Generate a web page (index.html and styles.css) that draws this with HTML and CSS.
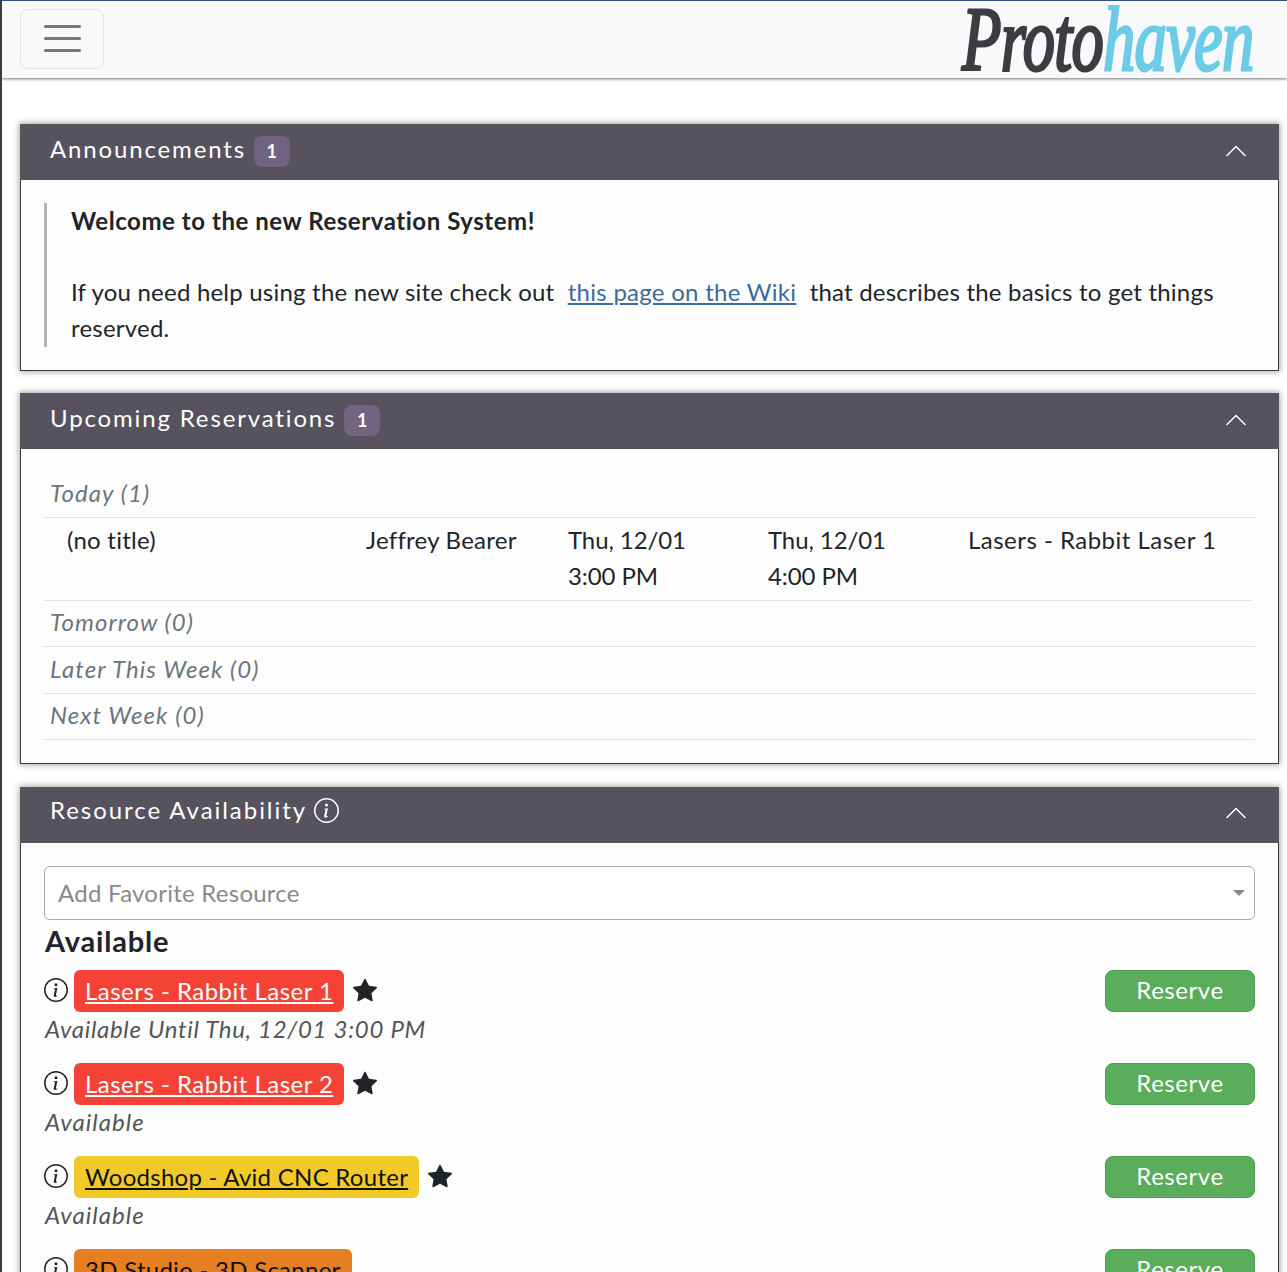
FILE: index.html
```html
<!DOCTYPE html>
<html lang="en">
<head>
<meta charset="utf-8">
<title>Protohaven Reservations</title>
<link rel="stylesheet" href="styles.css">
</head>
<body>
<div class="page">
  <nav class="navbar">
    <button class="toggler" aria-label="Menu"><span></span><span></span><span></span></button>
    <div class="logo"><span class="logo-dark">Proto</span><span class="logo-blue">haven</span></div>
  </nav>
  <main class="main">
    <section class="card">
      <header class="card-head">
        <h2 class="card-title">Announcements</h2><span class="badge">1</span>
        <svg class="chev" viewBox="0 0 16 16"><path d="M7.646 4.646a.5.5 0 0 1 .708 0l6 6a.5.5 0 0 1-.708.708L8 5.707l-5.646 5.647a.5.5 0 0 1-.708-.708l6-6z"/></svg>
      </header>
      <div class="card-body">
        <blockquote class="quote">
          <p class="quote-lead">Welcome to the new Reservation System!</p>
          <p class="quote-text">If you need help using the new site check out <a class="wiki" href="#">this page on the Wiki</a> that describes the basics to get things reserved.</p>
        </blockquote>
      </div>
    </section>

    <section class="card">
      <header class="card-head">
        <h2 class="card-title">Upcoming Reservations</h2><span class="badge">1</span>
        <svg class="chev" viewBox="0 0 16 16"><path d="M7.646 4.646a.5.5 0 0 1 .708 0l6 6a.5.5 0 0 1-.708.708L8 5.707l-5.646 5.647a.5.5 0 0 1-.708-.708l6-6z"/></svg>
      </header>
      <div class="card-body upcoming">
        <div class="day">Today (1)</div>
        <div class="res-row">
          <div>(no title)</div>
          <div>Jeffrey Bearer</div>
          <div class="cell-date">Thu, 12/01<br>3:00 PM</div>
          <div class="cell-date">Thu, 12/01<br>4:00 PM</div>
          <div class="cell-res">Lasers - Rabbit Laser 1</div>
        </div>
        <div class="day">Tomorrow (0)</div>
        <div class="day">Later This Week (0)</div>
        <div class="day">Next Week (0)</div>
      </div>
    </section>

    <section class="card">
      <header class="card-head">
        <h2 class="card-title card-title-res">Resource Availability</h2>
        <svg class="head-info" viewBox="0 0 16 16"><path d="M8 15A7 7 0 1 1 8 1a7 7 0 0 1 0 14zm0 1A8 8 0 1 0 8 0a8 8 0 0 0 0 16z"/><path d="m8.93 6.588-2.29.287-.082.38.45.083c.294.07.352.176.288.469l-.738 3.468c-.194.897.105 1.319.808 1.319.545 0 1.178-.252 1.465-.598l.088-.416c-.2.176-.492.246-.686.246-.275 0-.375-.193-.304-.533L8.93 6.588zM9 4.5a1 1 0 1 1-2 0 1 1 0 0 1 2 0z"/></svg>
        <svg class="chev" viewBox="0 0 16 16"><path d="M7.646 4.646a.5.5 0 0 1 .708 0l6 6a.5.5 0 0 1-.708.708L8 5.707l-5.646 5.647a.5.5 0 0 1-.708-.708l6-6z"/></svg>
      </header>
      <div class="card-body resources">
        <div class="select"><span>Add Favorite Resource</span><i class="caret"></i></div>
        <h3 class="avail-title">Available</h3>

        <div class="res-item">
          <svg class="info" viewBox="0 0 16 16"><path d="M8 15A7 7 0 1 1 8 1a7 7 0 0 1 0 14zm0 1A8 8 0 1 0 8 0a8 8 0 0 0 0 16z"/><path d="m8.93 6.588-2.29.287-.082.38.45.083c.294.07.352.176.288.469l-.738 3.468c-.194.897.105 1.319.808 1.319.545 0 1.178-.252 1.465-.598l.088-.416c-.2.176-.492.246-.686.246-.275 0-.375-.193-.304-.533L8.93 6.588zM9 4.5a1 1 0 1 1-2 0 1 1 0 0 1 2 0z"/></svg>
          <a class="tag tag-red" href="#">Lasers - Rabbit Laser 1</a>
          <svg class="star" viewBox="0 0 16 16"><path d="M3.612 15.443c-.386.198-.824-.149-.746-.592l.83-4.73L.173 6.765c-.329-.314-.158-.888.283-.95l4.898-.696L7.538.792c.197-.39.73-.39.927 0l2.184 4.327 4.898.696c.441.062.612.636.282.95l-3.522 3.356.83 4.73c.078.443-.36.79-.746.592L8 13.187l-4.389 2.256z"/></svg>
          <button class="reserve">Reserve</button>
          <div class="status status-until">Available Until Thu, 12/01 3:00 PM</div>
        </div>

        <div class="res-item">
          <svg class="info" viewBox="0 0 16 16"><path d="M8 15A7 7 0 1 1 8 1a7 7 0 0 1 0 14zm0 1A8 8 0 1 0 8 0a8 8 0 0 0 0 16z"/><path d="m8.93 6.588-2.29.287-.082.38.45.083c.294.07.352.176.288.469l-.738 3.468c-.194.897.105 1.319.808 1.319.545 0 1.178-.252 1.465-.598l.088-.416c-.2.176-.492.246-.686.246-.275 0-.375-.193-.304-.533L8.93 6.588zM9 4.5a1 1 0 1 1-2 0 1 1 0 0 1 2 0z"/></svg>
          <a class="tag tag-red" href="#">Lasers - Rabbit Laser 2</a>
          <svg class="star" viewBox="0 0 16 16"><path d="M3.612 15.443c-.386.198-.824-.149-.746-.592l.83-4.73L.173 6.765c-.329-.314-.158-.888.283-.95l4.898-.696L7.538.792c.197-.39.73-.39.927 0l2.184 4.327 4.898.696c.441.062.612.636.282.95l-3.522 3.356.83 4.73c.078.443-.36.79-.746.592L8 13.187l-4.389 2.256z"/></svg>
          <button class="reserve">Reserve</button>
          <div class="status">Available</div>
        </div>

        <div class="res-item">
          <svg class="info" viewBox="0 0 16 16"><path d="M8 15A7 7 0 1 1 8 1a7 7 0 0 1 0 14zm0 1A8 8 0 1 0 8 0a8 8 0 0 0 0 16z"/><path d="m8.93 6.588-2.29.287-.082.38.45.083c.294.07.352.176.288.469l-.738 3.468c-.194.897.105 1.319.808 1.319.545 0 1.178-.252 1.465-.598l.088-.416c-.2.176-.492.246-.686.246-.275 0-.375-.193-.304-.533L8.93 6.588zM9 4.5a1 1 0 1 1-2 0 1 1 0 0 1 2 0z"/></svg>
          <a class="tag tag-yellow" href="#">Woodshop - Avid CNC Router</a>
          <svg class="star" viewBox="0 0 16 16"><path d="M3.612 15.443c-.386.198-.824-.149-.746-.592l.83-4.73L.173 6.765c-.329-.314-.158-.888.283-.95l4.898-.696L7.538.792c.197-.39.73-.39.927 0l2.184 4.327 4.898.696c.441.062.612.636.282.95l-3.522 3.356.83 4.73c.078.443-.36.79-.746.592L8 13.187l-4.389 2.256z"/></svg>
          <button class="reserve">Reserve</button>
          <div class="status">Available</div>
        </div>

        <div class="res-item">
          <svg class="info" viewBox="0 0 16 16"><path d="M8 15A7 7 0 1 1 8 1a7 7 0 0 1 0 14zm0 1A8 8 0 1 0 8 0a8 8 0 0 0 0 16z"/><path d="m8.93 6.588-2.29.287-.082.38.45.083c.294.07.352.176.288.469l-.738 3.468c-.194.897.105 1.319.808 1.319.545 0 1.178-.252 1.465-.598l.088-.416c-.2.176-.492.246-.686.246-.275 0-.375-.193-.304-.533L8.93 6.588zM9 4.5a1 1 0 1 1-2 0 1 1 0 0 1 2 0z"/></svg>
          <a class="tag tag-orange" href="#">3D Studio - 3D Scanner</a>
          <span class="no-star"></span>
          <button class="reserve">Reserve</button>
        </div>
      </div>
    </section>
  </main>
</div>
</body>
</html>
```

FILE: styles.css
```css
* { box-sizing: border-box; }
html, body { margin: 0; height: 1272px; overflow: hidden; background: #fff; }
body {
  font-family: "Lato", "Noto Sans", sans-serif;
  font-size: 24px;
  line-height: 36px;
  letter-spacing: .25px;
  color: #212529;
}
.page {
  height: 1272px;
  overflow: hidden;
  border-top: 1px solid #2f5382;
  border-left: 2px solid #3b3b40;
}
.navbar {
  height: 77px;
  background: #f8f9fa;
  box-shadow: 0 1px 3px rgba(0,0,0,.55);
  display: flex;
  align-items: center;
  justify-content: space-between;
  padding: 0 33px 0 18px;
  position: relative;
}
.toggler {
  width: 84px;
  height: 60px;
  margin-top: -1px;
  background: transparent;
  border: 1px solid #e2e3e5;
  border-radius: 8px;
  display: flex;
  flex-direction: column;
  align-items: center;
  justify-content: center;
  gap: 9px;
  padding: 0 0 1px;
}
.toggler span { display: block; width: 37px; height: 3px; border-radius: 2px; background: #777; }
.logo {
  font-family: "Liberation Serif", serif;
  font-style: italic;
  font-weight: 400;
  font-size: 90px;
  line-height: 77px;
  letter-spacing: -1px;
  white-space: nowrap;
  transform: scaleX(.717);
  transform-origin: right center;
  -webkit-text-stroke-width: 3px;
  paint-order: stroke fill;
}
.logo-dark { color: #3b3d40; -webkit-text-stroke-color: #3b3d40; }
.logo-blue { color: #6ccbe6; -webkit-text-stroke-color: #6ccbe6; }
.main { padding: 46px 8px 0 18px; }
.card {
  margin-bottom: 22.4px;
  box-shadow: 0 0 6px 1px rgba(60,60,50,.45);
}
.card-head {
  height: 56px;
  background: #57535e;
  color: #fff;
  display: flex;
  align-items: center;
  padding: 0 30px 1px;
}
.card-title { margin: -6px 0 0; font-size: 24px; font-weight: 400; letter-spacing: 1.85px; }
.card-title-res { margin-top: -9px; letter-spacing: 1.95px; }
.badge {
  margin-left: 8px;
  width: 36px;
  height: 31px;
  background: #706480;
  border-radius: 8px;
  font-size: 18px;
  font-weight: 700;
  line-height: 31px;
  text-align: center;
}
.head-info { width: 25px; height: 25px; margin: -7px 0 0 7px; fill: #fff; }
.chev { width: 24px; height: 24px; margin: -2px 1px 0 auto; fill: #fff; }
.card-body {
  background: #fdfdfd;
  border: 1px solid #3a3a42;
  border-top: 0;
  padding: 23px;
}
.quote { margin: 0; border-left: 3px solid #b3b3b3; padding: 0 0 1px 24px; }
.quote-lead { margin: 0 0 35px; font-weight: 700; letter-spacing: .55px; }
.quote-text { margin: 0; letter-spacing: .21px; }
.wiki { color: #3e6a9c; margin: 0 7px; letter-spacing: .27px; }
.upcoming { padding-top: 22px; padding-bottom: 23px; }
.day {
  font-style: italic;
  color: #6c757d;
  padding: 3.6px 6px 0;
  border-bottom: 1px solid #dee2e6;
  height: 46.5px;
  letter-spacing: 1.05px;
}
.res-row {
  display: grid;
  grid-template-columns: 299px 202px 200px 200px 1fr;
  padding: 4px 0 6px 23px;
  margin-right: 4px;
  border-bottom: 1px solid #dee2e6;
}
.cell-date { letter-spacing: -.1px; }
.cell-res { letter-spacing: .48px; }
.select {
  height: 54px;
  background: #fff;
  border: 1px solid #a9a9a9;
  border-radius: 6px;
  display: flex;
  align-items: center;
  justify-content: space-between;
  padding: 0 9px 0 13px;
  color: #8a8a8a;
}
.caret { width: 0; height: 0; border-left: 6px solid transparent; border-right: 6px solid transparent; border-top: 6px solid #888; }
.avail-title { margin: 4px 0 12px; font-size: 29px; line-height: 34px; font-weight: 700; letter-spacing: .8px; padding-left: 1px; }
.res-item {
  display: grid;
  grid-template-columns: 24px auto 24px 1fr 150px;
  align-items: center;
  margin-bottom: 16px;
}
.info { width: 24px; height: 24px; margin-top: -2px; fill: #212529; }
.tag {
  margin-left: 6px;
  height: 42px;
  padding: 0 11px;
  border-radius: 6px;
  line-height: 42px;
  letter-spacing: .27px;
}
.tag-red { background: #f44336; color: #fff; letter-spacing: .48px; }
.tag-yellow { background: #f2ca27; color: #111; }
.tag-orange { background: #e67e22; color: #111; }
.star { width: 24px; height: 24px; margin: -2px 0 0 9px; fill: #212529; }
.no-star { width: 24px; }
.reserve {
  grid-column: 5;
  height: 42px;
  background: #5aad5a;
  border: 1px solid #4a9a4f;
  border-radius: 8px;
  color: #fff;
  font: inherit;
  letter-spacing: .55px;
  padding: 0 0 2px;
}
.status { grid-column: 1 / -1; font-style: italic; color: #555; padding-left: 1px; margin-top: -1px; letter-spacing: 1.05px; }
.status-until { letter-spacing: .7px; }
```
